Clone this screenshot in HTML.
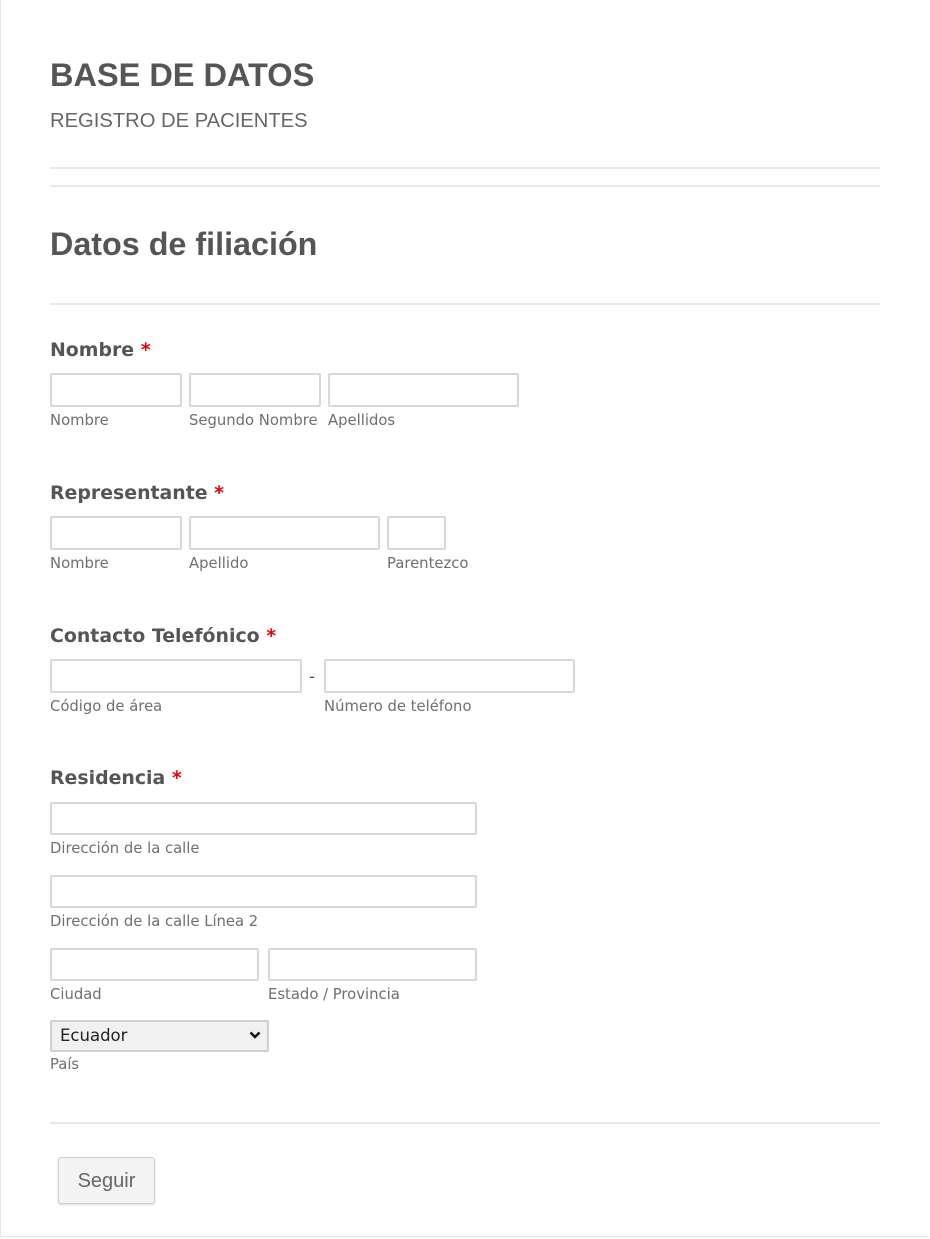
<!DOCTYPE html>
<html><head><meta charset="utf-8"><style>
body{margin:0;width:930px;height:1239px;background:#fff;position:relative;overflow:hidden;font-family:"DejaVu Sans",Verdana,sans-serif}
.frame{position:absolute;left:0;top:0;width:928px;height:1236px;border-left:1px solid #e6e6e6;border-bottom:1px solid #e6e6e6}
.a{position:absolute}
.hr{position:absolute;left:50px;width:830px;height:0;border-top:2px solid #e8e8e8}
.in{position:absolute;height:30px;border:2px solid #d8d8d8;border-radius:2px;background:#fff;box-sizing:content-box}
.lbl{position:absolute;left:50px;font-weight:bold;font-size:18.9px;color:#555}
.lbl span{color:#e00}
.sub{position:absolute;font-size:14.8px;color:#6f6f6f}
</style></head><body>
<div class="frame"></div>
<div class="a" style="left:50px;top:57px;font:bold 32.5px 'Liberation Sans',Arial,sans-serif;color:#555">BASE DE DATOS</div>
<div class="a" style="left:50px;top:110px;font:20.2px 'Liberation Sans',Arial,sans-serif;color:#666">REGISTRO DE PACIENTES</div>
<div class="hr" style="top:167px"></div>
<div class="hr" style="top:185px"></div>
<div class="a" style="left:50px;top:226px;font:bold 32.3px 'Liberation Sans',Arial,sans-serif;color:#555">Datos de filiación</div>
<div class="hr" style="top:303px"></div>

<div class="lbl" style="top:339px">Nombre <span>*</span></div>
<div class="in" style="left:50px;top:373px;width:128px"></div>
<div class="in" style="left:189px;top:373px;width:128px"></div>
<div class="in" style="left:328px;top:373px;width:187px"></div>
<div class="sub" style="left:50px;top:412px">Nombre</div>
<div class="sub" style="left:189px;top:412px">Segundo Nombre</div>
<div class="sub" style="left:328px;top:412px">Apellidos</div>

<div class="lbl" style="top:482px">Representante <span>*</span></div>
<div class="in" style="left:50px;top:516px;width:128px"></div>
<div class="in" style="left:189px;top:516px;width:187px"></div>
<div class="in" style="left:387px;top:516px;width:55px"></div>
<div class="sub" style="left:50px;top:555px">Nombre</div>
<div class="sub" style="left:189px;top:555px">Apellido</div>
<div class="sub" style="left:387px;top:555px">Parentezco</div>

<div class="lbl" style="top:625px">Contacto Telefónico <span>*</span></div>
<div class="in" style="left:50px;top:659px;width:248px"></div>
<div class="a" style="left:309px;top:667px;font-size:17px;color:#555">-</div>
<div class="in" style="left:324px;top:659px;width:247px"></div>
<div class="sub" style="left:50px;top:698px">Código de área</div>
<div class="sub" style="left:324px;top:698px">Número de teléfono</div>

<div class="lbl" style="top:767px">Residencia <span>*</span></div>
<div class="in" style="left:50px;top:802px;width:423px;height:29px"></div>
<div class="sub" style="left:50px;top:840px">Dirección de la calle</div>
<div class="in" style="left:50px;top:875px;width:423px;height:29px"></div>
<div class="sub" style="left:50px;top:913px">Dirección de la calle Línea 2</div>
<div class="in" style="left:50px;top:948px;width:205px;height:29px"></div>
<div class="in" style="left:268px;top:948px;width:205px;height:29px"></div>
<div class="sub" style="left:50px;top:986px">Ciudad</div>
<div class="sub" style="left:268px;top:986px">Estado / Provincia</div>
<div class="a" style="left:50px;top:1020px;width:215px;height:28px;border:2px solid #d0d0d0;background:#f1f1f1;border-radius:2px"></div>
<div class="a" style="left:60px;top:1026px;font-size:16.5px;color:#222">Ecuador</div>
<svg class="a" style="left:249px;top:1030px" width="12" height="10" viewBox="0 0 12 10"><path d="M1.5 2.5 6 7 10.5 2.5" fill="none" stroke="#111" stroke-width="2.4"/></svg>
<div class="sub" style="left:50px;top:1056px">País</div>

<div class="hr" style="top:1122px"></div>
<div class="a" style="left:58px;top:1157px;width:95px;height:45px;border:1px solid #cfcfcf;border-radius:3px;background:#f3f3f3;box-shadow:0 1px 2px rgba(0,0,0,.15);font:20px 'Liberation Sans',Arial,sans-serif;color:#666;text-align:center;line-height:46px">Seguir</div>
</body></html>
